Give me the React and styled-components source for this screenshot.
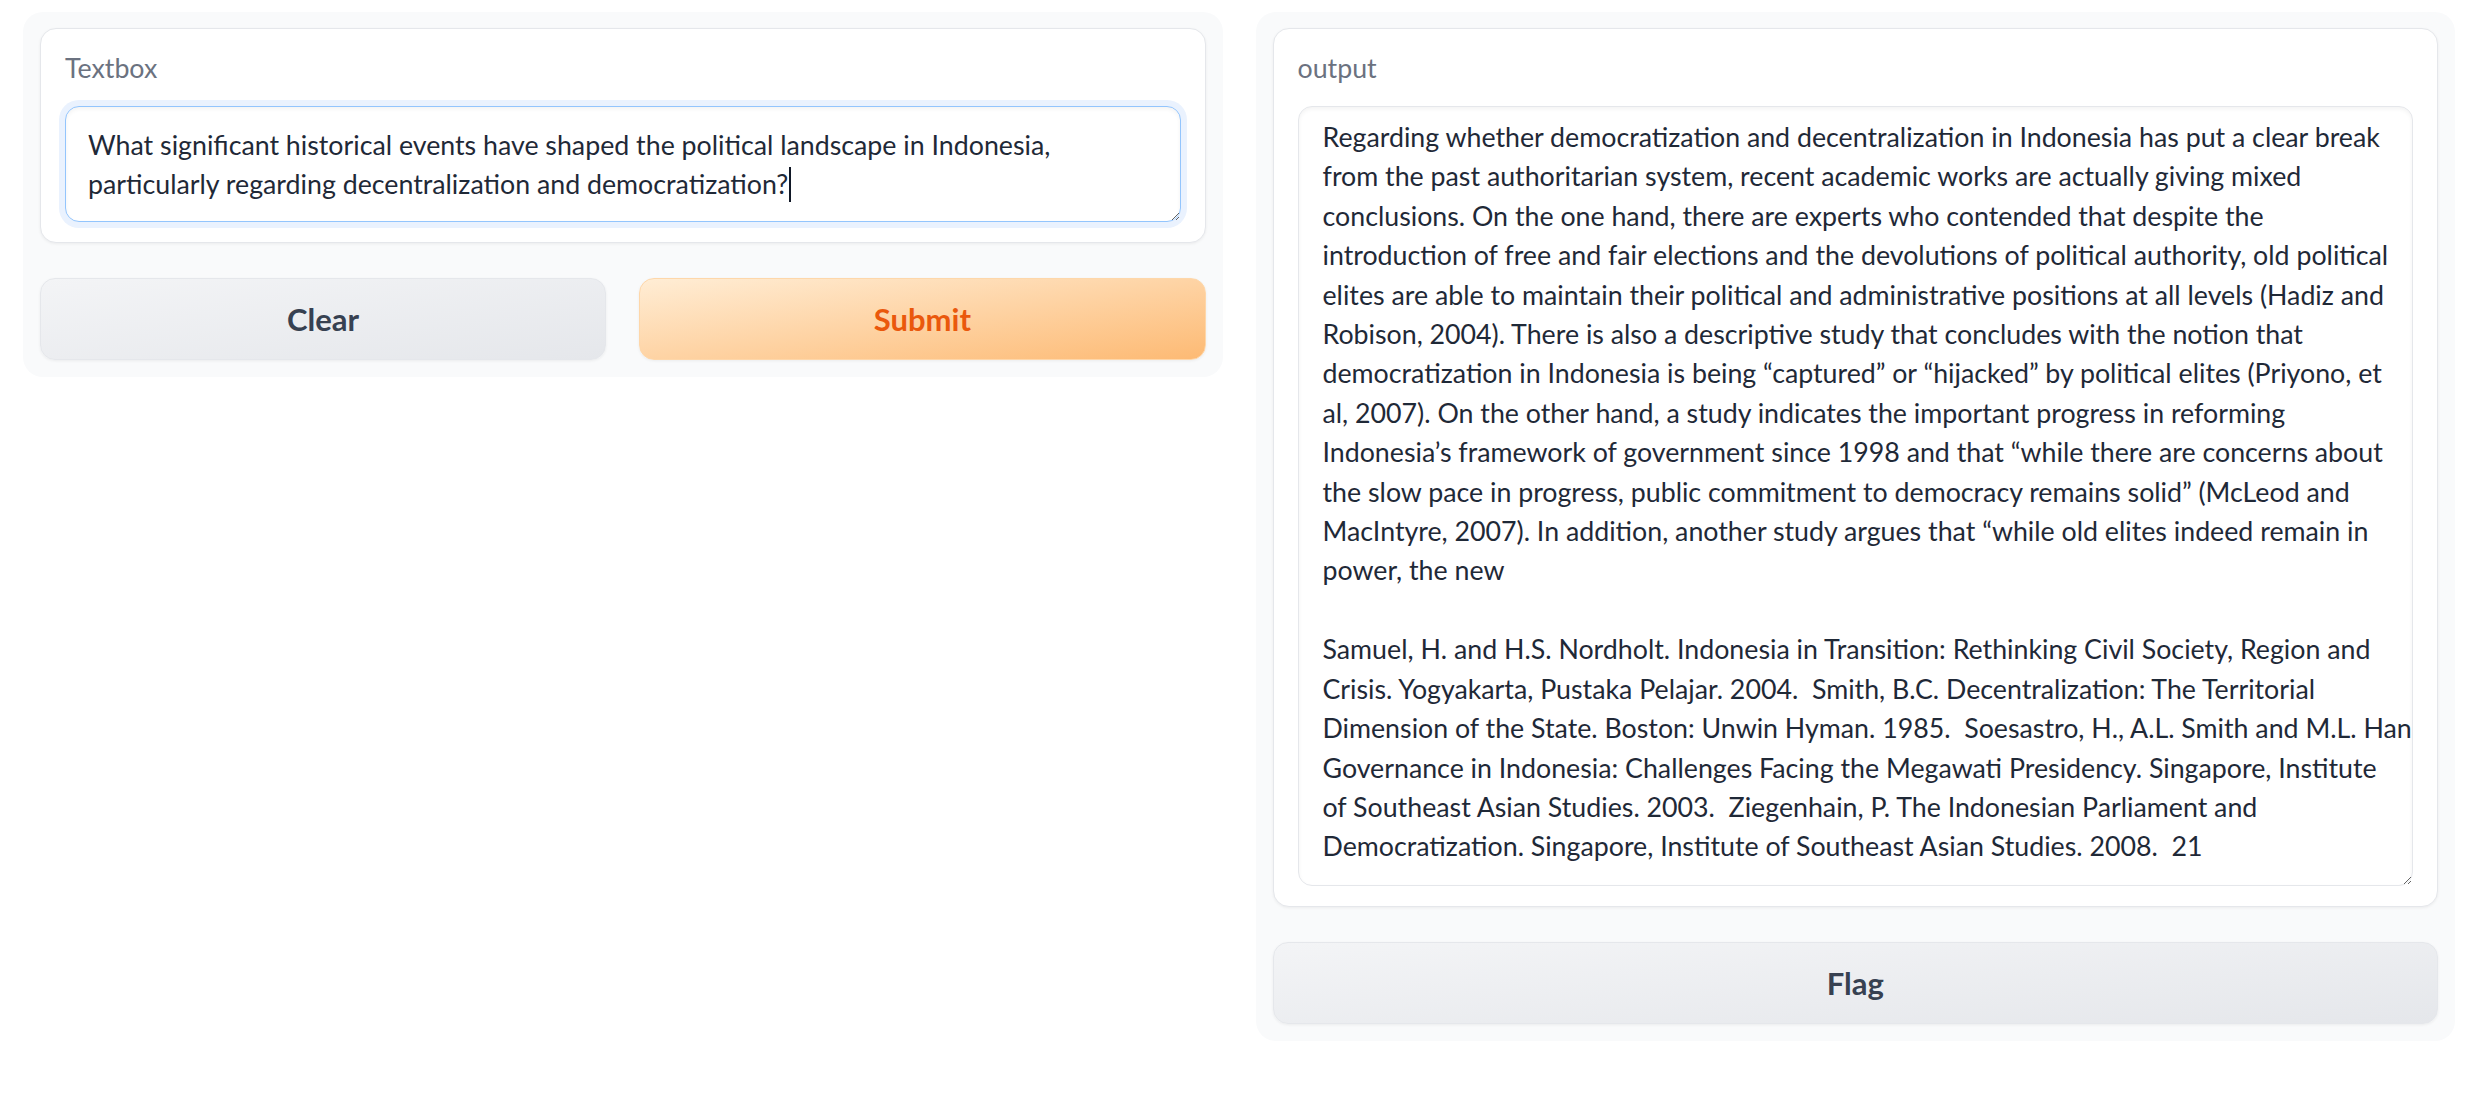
import React, { useEffect, useState } from "react";
import styled, { createGlobalStyle, css } from "styled-components";

const questionLines = [
  "What significant historical events have shaped the political landscape in Indonesia,",
  "particularly regarding decentralization and democratization?",
];

const answer = [
  "Regarding whether democratization and decentralization in Indonesia has put a clear break",
  "from the past authoritarian system, recent academic works are actually giving mixed",
  "conclusions. On the one hand, there are experts who contended that despite the",
  "introduction of free and fair elections and the devolutions of political authority, old political",
  "elites are able to maintain their political and administrative positions at all levels (Hadiz and",
  "Robison, 2004). There is also a descriptive study that concludes with the notion that",
  "democratization in Indonesia is being \u201ccaptured\u201d or \u201chijacked\u201d by political elites (Priyono, et",
  "al, 2007). On the other hand, a study indicates the important progress in reforming",
  "Indonesia\u2019s framework of government since 1998 and that \u201cwhile there are concerns about",
  "the slow pace in progress, public commitment to democracy remains solid\u201d (McLeod and",
  "MacIntyre, 2007). In addition, another study argues that \u201cwhile old elites indeed remain in",
  "power, the new",
  "",
  "Samuel, H. and H.S. Nordholt. Indonesia in Transition: Rethinking Civil Society, Region and",
  "Crisis. Yogyakarta, Pustaka Pelajar. 2004.  Smith, B.C. Decentralization: The Territorial",
  "Dimension of the State. Boston: Unwin Hyman. 1985.  Soesastro, H., A.L. Smith and M.L. Han.",
  "Governance in Indonesia: Challenges Facing the Megawati Presidency. Singapore, Institute",
  "of Southeast Asian Studies. 2003.  Ziegenhain, P. The Indonesian Parliament and",
  "Democratization. Singapore, Institute of Southeast Asian Studies. 2008.  21",
].join("\n");

const TEXT_FONT = "26.75px Lato";

function Textbox() {
  // caret sits after the last typed character, measured from the real font
  const [caretLeft, setCaretLeft] = useState(null);

  useEffect(() => {
    const measure = () => {
      const ctx = document.createElement("canvas").getContext("2d");
      ctx.font = TEXT_FONT;
      const last = questionLines[questionLines.length - 1];
      setCaretLeft(23 + ctx.measureText(last).width);
    };
    document.fonts.ready.then(measure);
  }, []);

  return (
    <Block>
      <Label>Textbox</Label>
      <Field>
        <TextArea
          $focused
          $height={116}
          wrap="off"
          defaultValue={questionLines.join("\n")}
        />
        {caretLeft !== null && <Caret style={{ left: caretLeft }} />}
      </Field>
    </Block>
  );
}

function App() {
  return (
    <>
      <GlobalStyle />
      <Page>
        <Panel>
          <Textbox />
          <ButtonRow>
            <Button>Clear</Button>
            <Button $primary>Submit</Button>
          </ButtonRow>
        </Panel>

        <Panel>
          <Block>
            <Label>output</Label>
            <TextArea
              $height={780}
              $output
              wrap="off"
              readOnly
              value={answer}
            />
          </Block>
          <Button>Flag</Button>
        </Panel>
      </Page>
    </>
  );
}

export default App;

const GlobalStyle = createGlobalStyle`
  html, body {
    margin: 0;
    background: #ffffff;
  }
  body {
    font-family: Lato, "Noto Sans", sans-serif;
    color: #1f2937;
  }
  * {
    box-sizing: border-box;
  }
`;

const Page = styled.div`
  display: flex;
  align-items: flex-start;
  gap: 33px;
  padding: 12px 15px 12px 23px;
`;

const Panel = styled.div`
  flex: 1;
  min-width: 0;
  display: flex;
  flex-direction: column;
  gap: 35px;
  padding: 16px 17px 17px;
  background: #f9fafb;
  border-radius: 20px;
`;

const Block = styled.div`
  display: flex;
  flex-direction: column;
  padding: 21px 24px 20px;
  background: #ffffff;
  border: 1px solid #e5e7eb;
  border-radius: 16px;
  box-shadow: 0 1px 3px rgba(0, 0, 0, 0.06);
`;

const Label = styled.span`
  font-size: 26.75px;
  line-height: 36px;
  color: #6b7280;
  margin-bottom: 20px;
`;

const Field = styled.div`
  position: relative;
`;

const Caret = styled.span`
  position: absolute;
  top: 61px;
  width: 2px;
  height: 35px;
  background: #111827;
  pointer-events: none;
`;

const TextArea = styled.textarea`
  display: block;
  width: 100%;
  height: ${(props) => props.$height}px;
  margin: 0;
  padding: ${(props) => (props.$output ? "11px 4px 18px 24px" : "19px 16px 16px 22px")};
  font-family: Lato, "Noto Sans", sans-serif;
  font-size: 26.75px;
  line-height: 39.4px;
  color: #1f2937;
  background: #ffffff;
  border: 1px solid #e5e7eb;
  border-radius: 14px;
  box-shadow: inset 0 2px 4px rgba(0, 0, 0, 0.05);
  resize: vertical;
  overflow: hidden;
  outline: none;

  ${(props) =>
    props.$focused &&
    css`
      border-color: #93c5fd;
      box-shadow: 0 0 0 6px #eaf2fe, inset 0 2px 4px rgba(0, 0, 0, 0.05);
    `}
`;

const ButtonRow = styled.div`
  display: grid;
  grid-template-columns: 1fr 1fr;
  gap: 33px;
`;

const Button = styled.button`
  display: flex;
  align-items: center;
  justify-content: center;
  width: 100%;
  height: 82px;
  padding: 0 24px;
  font-family: Lato, "Noto Sans", sans-serif;
  font-size: 31px;
  font-weight: 700;
  border-radius: 15px;
  cursor: pointer;
  box-shadow: 0 1px 3px rgba(0, 0, 0, 0.06);
  color: ${(props) => (props.$primary ? "#ea580c" : "#374151")};
  border: 1px solid ${(props) => (props.$primary ? "#fed7aa" : "#e5e7eb")};
  background: ${(props) =>
    props.$primary
      ? "linear-gradient(to bottom right, #ffedd5, #fdba74)"
      : "linear-gradient(to bottom right, #f3f4f6, #e5e7eb)"};
`;
